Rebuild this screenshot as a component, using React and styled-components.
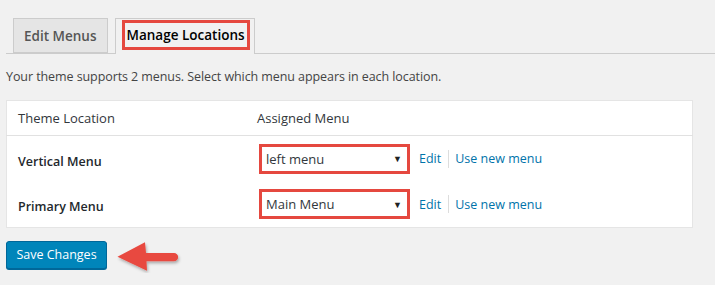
import React from 'react'
import styled, { createGlobalStyle } from 'styled-components'

const GlobalStyle = createGlobalStyle`
    body {
        margin: 0;
        background: #f1f1f1;
        font-family: "Open Sans", "Liberation Sans", sans-serif;
        color: #444;
    }
`;

const Page = styled.div`
    padding: 18px 0 0 6px;
`;

const TabBar = styled.nav`
    display: flex;
    gap: 7px;
    padding-left: 7px;
    border-bottom: 1px solid #ccc;
    height: 35px;
`;

const Tab = styled.div`
    box-sizing: border-box;
    height: ${p => (p.$active ? '36px' : '35px')};
    padding: ${p => (p.$active ? '0 4px 0 6px' : '0 10px')};
    display: flex;
    align-items: ${p => (p.$active ? 'flex-start' : 'center')};
    border: 1px solid #ccc;
    border-bottom: ${p => (p.$active ? 'none' : '1px solid #ccc')};
    background: ${p => (p.$active ? '#f1f1f1' : '#e5e5e5')};
    color: ${p => (p.$active ? '#000' : '#555')};
    font-size: 13.5px;
    font-weight: 600;
`;

const Highlight = styled.span`
    box-sizing: border-box;
    display: flex;
    align-items: center;
    height: 30px;
    margin-top: 1px;
    padding: 0 2px 1px 2px;
    border: 3px solid #e5483f;
`;

const Intro = styled.p`
    margin: 14px 0 15px;
    font-size: 12.5px;
    letter-spacing: -0.08px;
    color: #444;
`;

const Table = styled.table`
    width: 687px;
    background: #fff;
    border: 1px solid #e5e5e5;
    border-collapse: collapse;
    font-size: 13px;
    th {
        text-align: left;
        font-weight: 400;
        color: #32373c;
        height: 34px;
        padding: 0 0 0 11px;
        border-bottom: 1px solid #e1e1e1;
    }
    tbody tr {
        height: 46px;
    }
    td {
        padding: 0 0 0 11px;
    }
`;

const RowLabel = styled.td`
    width: 228px;
    font-size: 12.5px;
    font-weight: 600;
    color: #23282d;
    padding-top: 5px !important;
`;

const SelectCell = styled.td`
    padding-left: 13px !important;
`;

const SelectWrap = styled.div`
    display: flex;
    align-items: center;
    gap: 9px;
`;

const FakeSelect = styled.div`
    box-sizing: border-box;
    width: 151px;
    height: 30px;
    display: flex;
    align-items: center;
    justify-content: space-between;
    padding: 0 5px 0 4px;
    border: 3px solid #e5483f;
    background: #fff;
    color: #32373c;
    font-size: 13px;
    span {
        font-size: 9px;
        color: #222;
    }
`;

const Links = styled.div`
    display: flex;
    align-items: center;
    color: #0073aa;
    font-size: 12.5px;
`;

const Sep = styled.span`
    width: 1px;
    height: 18px;
    background: #ddd;
    margin: 0 6px 0 7px;
`;

const Footer = styled.div`
    display: flex;
    align-items: center;
    gap: 10px;
    margin-top: 9px;
`;

const SaveButton = styled.button`
    box-sizing: border-box;
    width: 101px;
    height: 28px;
    background: #0085ba;
    border: 1px solid #006799;
    border-radius: 3px;
    box-shadow: 0 1px 0 #006799;
    color: #fff;
    font-family: inherit;
    font-size: 12.5px;
    padding: 0 0 1px;
`;

const Arrow = () => (
    <svg width="70" height="36" viewBox="0 0 70 36">
        <defs>
            <filter id="sh" x="-20%" y="-20%" width="140%" height="160%">
                <feDropShadow dx="1" dy="2" stdDeviation="1.5" floodColor="#000" floodOpacity="0.3" />
            </filter>
        </defs>
        <g filter="url(#sh)">
            <path d="M0.5 19.7 L28 5.3 L29 16 L57 16 A4.15 4.15 0 0 1 57 24.3 L29.5 24.3 L30 33.7 Z" fill="#e8493f" />
        </g>
    </svg>
);

const rows = [
    { label: 'Vertical Menu', menu: 'left menu' },
    { label: 'Primary Menu', menu: 'Main Menu' },
];

const App = () => {
    return (
        <Page>
            <GlobalStyle />
            <TabBar>
                <Tab>Edit Menus</Tab>
                <Tab $active><Highlight>Manage Locations</Highlight></Tab>
            </TabBar>
            <Intro>Your theme supports 2 menus. Select which menu appears in each location.</Intro>
            <Table>
                <thead>
                    <tr>
                        <th>Theme Location</th>
                        <th>Assigned Menu</th>
                    </tr>
                </thead>
                <tbody>
                    {rows.map(row => (
                        <tr key={row.label}>
                            <RowLabel>{row.label}</RowLabel>
                            <SelectCell>
                                <SelectWrap>
                                    <FakeSelect>{row.menu}<span>▼</span></FakeSelect>
                                    <Links>Edit<Sep />Use new menu</Links>
                                </SelectWrap>
                            </SelectCell>
                        </tr>
                    ))}
                </tbody>
            </Table>
            <Footer>
                <SaveButton>Save Changes</SaveButton>
                <Arrow />
            </Footer>
        </Page>
    )
}

export default App
